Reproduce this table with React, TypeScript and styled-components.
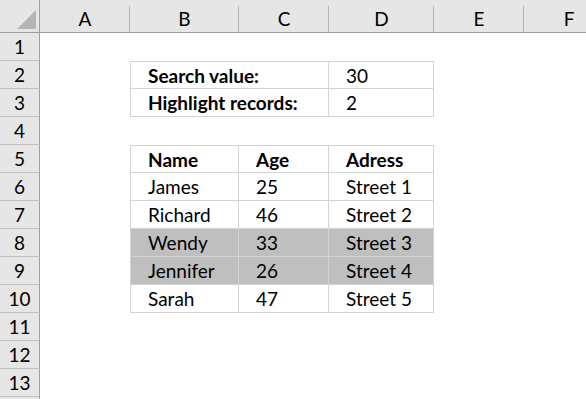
import React from 'react';
import styled, { createGlobalStyle, css } from 'styled-components';

const GlobalStyle = createGlobalStyle`
  html, body {
    margin: 0;
    padding: 0;
    background: #fff;
  }
  body {
    font-family: Lato, "Liberation Sans", sans-serif;
    color: #000;
  }
`;

const COLS = ['A', 'B', 'C', 'D', 'E', 'F'];
const VISIBLE_ROWS = 13;

const Sheet = styled.div`
  display: grid;
  grid-template-columns: 40px 90px 109px 90px 105px 90px 90px;
  grid-template-rows: 33px;
  grid-auto-rows: 28px;
  width: 586px;
  height: 399px;
  overflow: hidden;
  font-size: 19px;
`;

const Corner = styled.div`
  position: relative;
  background: #e6e6e6;
  border-right: 1px solid #9e9e9e;
  border-bottom: 1px solid #9e9e9e;
  box-sizing: border-box;

  &::after {
    content: '';
    position: absolute;
    left: 17px;
    top: 10px;
    width: 0;
    height: 0;
    border-left: 19px solid transparent;
    border-bottom: 19px solid #b5b5b5;
  }
`;

const ColHeader = styled.div`
  position: relative;
  display: flex;
  align-items: center;
  justify-content: center;
  padding-top: 4px;
  background: #e6e6e6;
  border-bottom: 1px solid #9e9e9e;
  box-sizing: border-box;

  &::after {
    content: '';
    position: absolute;
    right: 0;
    top: 6px;
    bottom: 0;
    width: 1px;
    background: #b4b4b4;
  }
`;

const RowHeader = styled.div`
  display: flex;
  align-items: center;
  justify-content: center;
  background: #e6e6e6;
  border-right: 1px solid #9e9e9e;
  border-bottom: 1px solid #c0c0c0;
  box-sizing: border-box;
`;

const Cell = styled.div<{
  $boxed?: boolean;
  $top?: boolean;
  $left?: boolean;
  $bold?: boolean;
  $fill?: boolean;
  $span?: number;
}>`
  display: flex;
  align-items: center;
  padding-left: 17px;
  box-sizing: border-box;
  white-space: nowrap;
  font-weight: ${({ $bold }) => ($bold ? 700 : 400)};
  background: ${({ $fill }) => ($fill ? '#bfbfbf' : '#fff')};
  ${({ $span }) =>
    $span &&
    css`
      grid-column: span ${$span};
    `}
  ${({ $boxed, $top, $left }) =>
    $boxed &&
    css`
      border-right: 1px solid #d4d4d4;
      border-bottom: 1px solid #d4d4d4;
      ${$top && 'border-top: 1px solid #d4d4d4;'}
      ${$left && 'border-left: 1px solid #d4d4d4;'}
    `}
`;

interface CellData {
  text?: string;
  bold?: boolean;
  span?: number;
  boxed?: boolean;
  top?: boolean;
  left?: boolean;
  fill?: boolean;
}

// one entry per column A..F, a spanned cell counts once
const empty = (n: number): CellData[] => Array.from({ length: n }, () => ({}));

const records = [
  ['James', '25', 'Street 1'],
  ['Richard', '46', 'Street 2'],
  ['Wendy', '33', 'Street 3'],
  ['Jennifer', '26', 'Street 4'],
  ['Sarah', '47', 'Street 5'],
];
const highlighted = [2, 3];

const recordRow = (vals: string[], opts: { bold?: boolean; top?: boolean; fill?: boolean }): CellData[] => [
  {},
  ...vals.map((text, i) => ({ text, boxed: true, left: i === 0, ...opts })),
  ...empty(2),
];

const rows: CellData[][] = [
  empty(6),
  [
    {},
    { text: 'Search value:', bold: true, span: 2, boxed: true, top: true, left: true },
    { text: '30', boxed: true, top: true },
    ...empty(2),
  ],
  [
    {},
    { text: 'Highlight records:', bold: true, span: 2, boxed: true, left: true },
    { text: '2', boxed: true },
    ...empty(2),
  ],
  empty(6),
  recordRow(['Name', 'Age', 'Adress'], { bold: true, top: true }),
  ...records.map((r, i) => recordRow(r, { fill: highlighted.includes(i) })),
  empty(6),
  empty(6),
  empty(6),
  empty(6),
];

const App: React.FC = () => {
  return (
    <>
      <GlobalStyle />
      <Sheet>
        <Corner />
        {COLS.map((c) => (
          <ColHeader key={c}>{c}</ColHeader>
        ))}
        {rows.map((row, r) => (
          <React.Fragment key={r}>
            {/* the 14th row only peeks in at the bottom edge, no label shows */}
            <RowHeader>{r < VISIBLE_ROWS ? r + 1 : ''}</RowHeader>
            {row.map((cell, i) => (
              <Cell
                key={i}
                $boxed={cell.boxed}
                $top={cell.top}
                $left={cell.left}
                $bold={cell.bold}
                $fill={cell.fill}
                $span={cell.span}
              >
                {cell.text}
              </Cell>
            ))}
          </React.Fragment>
        ))}
      </Sheet>
    </>
  );
};

export default App;
